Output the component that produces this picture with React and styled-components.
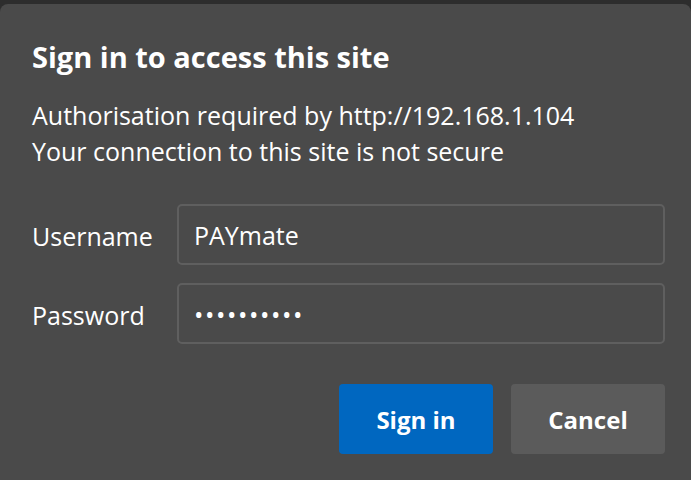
import React from "react";
import styled, { createGlobalStyle } from "styled-components";

const GlobalStyle = createGlobalStyle`
  html, body {
    margin: 0;
    padding: 0;
    background: #2d2d2d;
  }
  body {
    font-family: "Open Sans", "Noto Sans", sans-serif;
  }
`;

const Dialog = styled.div`
  box-sizing: border-box;
  width: 691px;
  height: 476px;
  margin-top: 4px;
  background: #4a4a4a;
  border-radius: 8px 8px 0 0;
  padding: 35px 26px 0 32px;
  color: #ffffff;
  display: flex;
  flex-direction: column;
`;

const Title = styled.h1`
  margin: 0;
  font-size: 29px;
  font-weight: 700;
  line-height: 36px;
`;

const Info = styled.p`
  margin: 22px 0 0;
  font-size: 25px;
  line-height: 36px;
`;

const Form = styled.div`
  margin-top: 35px;
  display: grid;
  grid-template-columns: 145px 1fr;
  row-gap: 18px;
  align-items: center;
`;

const Label = styled.label`
  font-size: 25px;
  padding-top: 3px;
`;

const Field = styled.div`
  box-sizing: border-box;
  height: 61px;
  border: 2px solid #5f5f5f;
  border-radius: 5px;
  padding: 0 15px;
  display: flex;
  align-items: center;
  font-size: 25px;
  letter-spacing: ${(p) => (p.$secret ? "1.6px" : "0")};
`;

const Actions = styled.div`
  margin-top: 40px;
  display: flex;
  justify-content: flex-end;
  gap: 18px;
`;

const Button = styled.button`
  width: 154px;
  height: 70px;
  border: none;
  border-radius: 4px;
  font-family: inherit;
  font-size: 24px;
  font-weight: 700;
  color: #ffffff;
  background: ${(p) => (p.$primary ? "#0067c0" : "#5b5b5b")};
`;

export default function App() {
  return (
    <>
      <GlobalStyle />
      <Dialog>
        <Title>Sign in to access this site</Title>
        <Info>
          Authorisation required by http://192.168.1.104
          <br />
          Your connection to this site is not secure
        </Info>
        <Form>
          <Label>Username</Label>
          <Field>PAYmate</Field>
          <Label>Password</Label>
          <Field $secret>{"\u2022".repeat(10)}</Field>
        </Form>
        <Actions>
          <Button $primary>Sign in</Button>
          <Button>Cancel</Button>
        </Actions>
      </Dialog>
    </>
  );
}
